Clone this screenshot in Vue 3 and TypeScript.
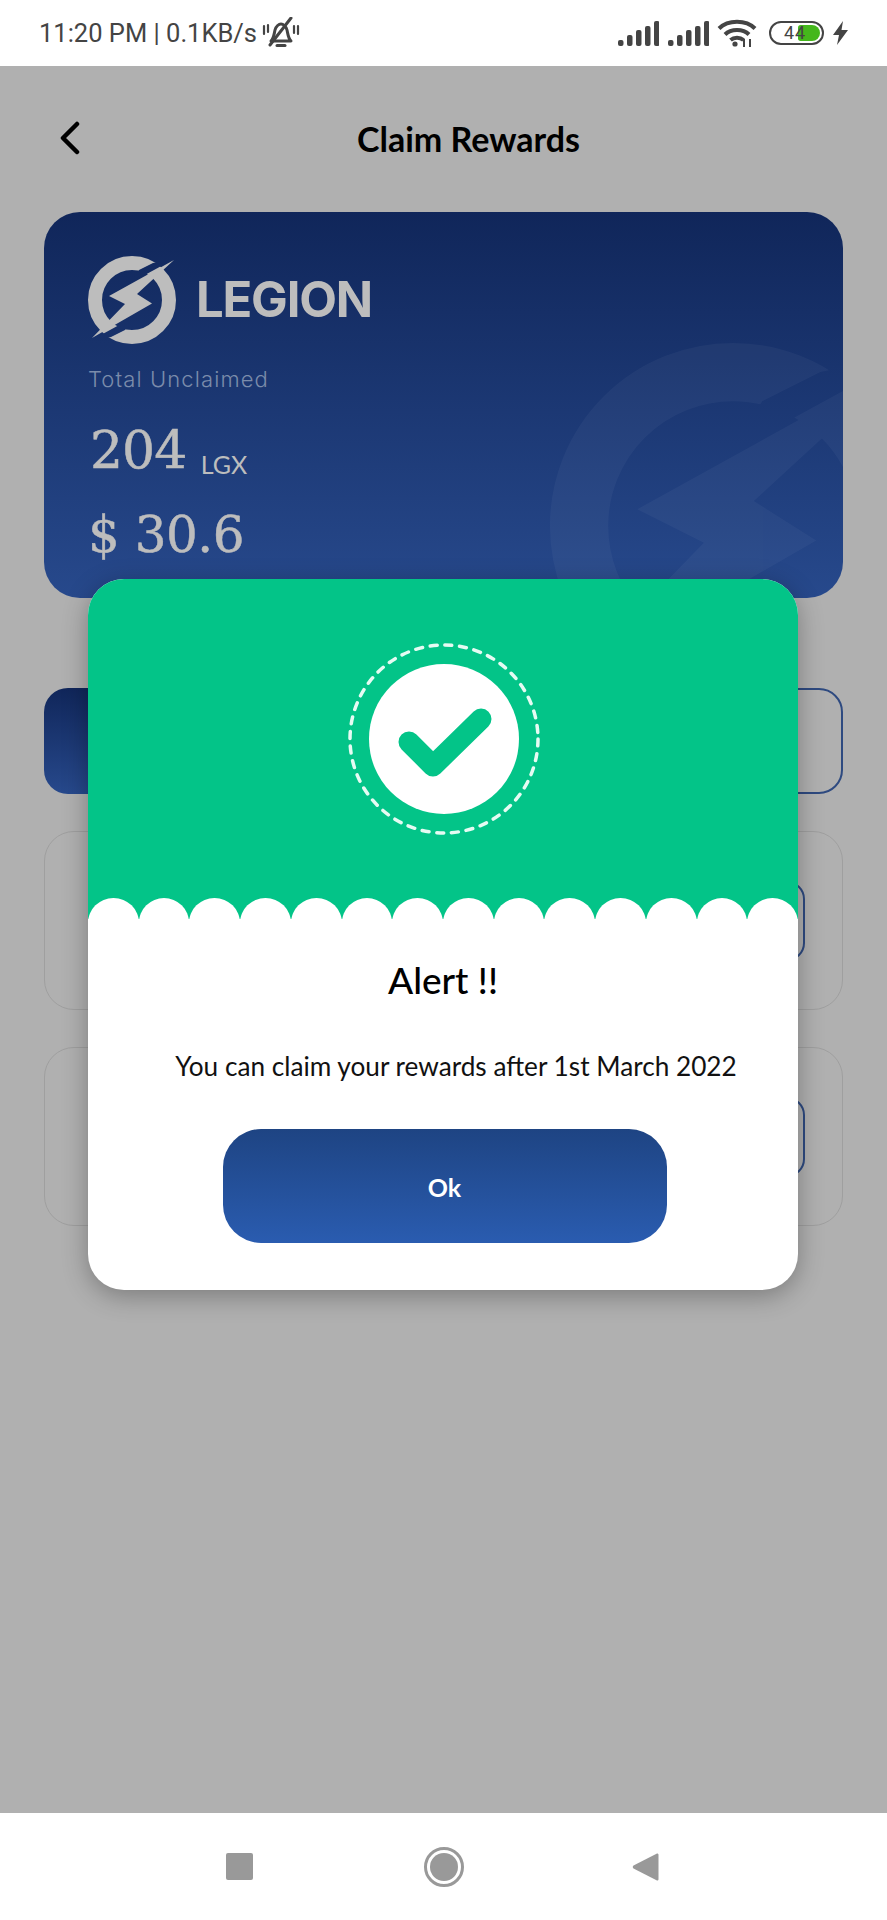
<template>
  <div class="page">
    <svg class="defs" width="0" height="0">
      <defs>
        <mask id="slash" maskUnits="userSpaceOnUse" x="-50" y="-50" width="100" height="100">
          <rect x="-50" y="-50" width="100" height="100" fill="#fff" />
          <polygon points="7,-30 21,-37 44,-42 0,-18" fill="#000" />
          <polygon points="-7,30 -21,37 -44,42 0,18" fill="#000" />
        </mask>
        <symbol id="legion" viewBox="-50 -50 100 100">
          <circle r="37" fill="none" stroke="currentColor" stroke-width="14" mask="url(#slash)" />
          <polygon points="-23,-4 42,-40 5,-6 20,3.5 -40,38 -7,4" fill="currentColor" />
        </symbol>
      </defs>
    </svg>

    <header class="status">
      <div class="status-left">
        <span class="clock">11:20 PM | 0.1KB/s</span>
        <svg class="bell" width="38" height="32" viewBox="0 0 38 32" fill="none" stroke="#444">
          <path d="M9 24c3-3 3-7 4-11 1-4 4-6 6-6s5 2 6 6c1 4 1 8 4 11z" stroke-width="3" stroke-linejoin="round" />
          <path d="M15 28.500h8" stroke-width="3" stroke-linecap="round" />
          <path d="M8 28 29 1" stroke-width="3" stroke-linecap="round" />
          <path d="M2 9v8M6 8v7M32 9v7M36 9v8" stroke-width="2.200" stroke-linecap="round" />
        </svg>
      </div>
      <div class="status-right">
        <svg v-for="n in 2" :key="n" class="signal" width="41" height="25" viewBox="0 0 41 25" fill="#444">
          <rect v-for="(h, i) in bars" :key="i" :x="i * 9" :y="25 - h" width="5.500" :height="h" rx="2" />
        </svg>
        <svg class="wifi" width="40" height="28" viewBox="0 0 40 28" fill="none" stroke="#444" stroke-width="4">
          <path d="M2 9.500C11 .5 29 .5 38 9.500" />
          <path d="M8 15.500c6-6 18-6 24 0" />
          <path d="M13.500 21c3.500-3 9.500-3 13 0" />
          <circle cx="18" cy="25" r="2.600" fill="#444" stroke="none" />
          <path d="M27 20v8M33 20v8" stroke-width="2" />
        </svg>
        <div class="battery">
          <span class="level"></span>
          <span class="pct">44</span>
        </div>
        <svg width="15" height="24" viewBox="0 0 15 24" fill="#444">
          <path d="M10 0 0 14h6l-2 10 11-15H8.500z" />
        </svg>
      </div>
    </header>

    <main class="backdrop">
      <div class="topbar">
        <svg class="back" width="22" height="34" viewBox="0 0 22 34" fill="none" stroke="#000" stroke-width="4.500" stroke-linecap="round" stroke-linejoin="round">
          <path d="M18 3 4 17l14 14" />
        </svg>
        <h1 class="title">Claim Rewards</h1>
      </div>

      <section class="card">
        <svg class="watermark"><use href="#legion" /></svg>
        <div class="brand">
          <svg class="logo"><use href="#legion" /></svg>
          <span class="brand-name">LEGION</span>
        </div>
        <div class="unclaimed">Total Unclaimed</div>
        <div class="amount">204 <span class="unit">LGX</span></div>
        <div class="amount usd">$ 30.6</div>
      </section>

      <div class="tabs">
        <div class="tab active"></div>
        <div class="tab"></div>
      </div>

      <div v-for="n in 2" :key="n" class="row">
        <div class="row-btn"></div>
      </div>
    </main>

    <footer class="navbar">
      <span class="nav-square"></span>
      <svg width="42" height="42" viewBox="0 0 42 42">
        <circle cx="21" cy="21" r="18.500" fill="none" stroke="#999" stroke-width="3" />
        <circle cx="21" cy="21" r="14" fill="#999" />
      </svg>
      <svg class="nav-back" width="28" height="30" viewBox="0 0 28 30">
        <path d="M25 1.500c1 0 1.500.5 1.500 1.500v24c0 1-.5 1.500-1.500 1.500L1.500 16.500c-1-.8-1-2.200 0-3z" fill="#999" />
      </svg>
    </footer>

    <div class="modal">
      <div class="modal-top">
        <svg class="tick" width="200" height="200" viewBox="-100 -100 200 200">
          <circle r="94" fill="none" stroke="#e6fbf3" stroke-width="3.500" stroke-dasharray="7 7.770" stroke-linecap="round" />
          <circle r="75" fill="#fff" />
          <path d="M-35 3-11 27 37-20" fill="none" stroke="#03c488" stroke-width="21" stroke-linecap="round" stroke-linejoin="round" />
        </svg>
        <div class="scallops">
          <span v-for="n in 14" :key="n" class="scallop"></span>
        </div>
      </div>
      <div class="modal-body">
        <h2 class="alert">Alert !!</h2>
        <p class="message">You can claim your rewards after 1st March 2022</p>
        <button class="ok" type="button">Ok</button>
      </div>
    </div>
  </div>
</template>

<script setup lang="ts">
const bars: number[] = [6, 11, 16, 20, 25]
</script>

<style>
html,
body {
  margin: 0;
  background: #fff;
}
</style>

<style scoped>
.page {
  position: relative;
  display: flex;
  flex-direction: column;
  width: 887px;
  height: 1920px;
  overflow: hidden;
  font-family: Lato, "Liberation Sans", sans-serif;
  background: #fff;
}

.defs {
  position: absolute;
}

.status {
  display: flex;
  justify-content: space-between;
  align-items: center;
  flex: none;
  height: 66px;
  padding: 0 39px 0 39px;
  box-sizing: border-box;
  color: #444;
}

.status-left,
.status-right {
  display: flex;
  align-items: center;
}

.clock {
  font-family: Roboto, sans-serif;
  font-size: 25.500px;
  white-space: nowrap;
}

.bell {
  margin-left: 5px;
}

.status-right {
  gap: 9px;
}

.wifi {
  margin-left: -1px;
}

.battery {
  position: relative;
  width: 55px;
  height: 24px;
  margin-left: 3px;
  border: 2.500px solid #444;
  border-radius: 13px;
  box-sizing: border-box;
}

.level {
  position: absolute;
  top: 2px;
  right: 2px;
  bottom: 2px;
  width: 22px;
  background: #45b71c;
  border-radius: 3px 9px 9px 3px;
}

.pct {
  position: absolute;
  top: 0;
  left: 13px;
  font-family: Roboto, sans-serif;
  font-size: 18px;
  line-height: 19px;
  letter-spacing: 1px;
  color: #444;
}

.backdrop {
  flex: 1;
  padding: 0 44px;
  background: #b0b0b0;
}

.topbar {
  display: flex;
  align-items: center;
  height: 146px;
  padding: 0 0 0 15px;
  box-sizing: border-box;
}

.back {
  flex: none;
  margin-top: -2px;
}

.title {
  margin: 0 0 0 276px;
  font-size: 34px;
  font-weight: 700;
  line-height: 40px;
  color: #000;
  white-space: nowrap;
}

.card {
  position: relative;
  height: 386px;
  padding: 38px 0 0 44px;
  box-sizing: border-box;
  overflow: hidden;
  color: #bdbdbd;
  background: linear-gradient(#10265a, #27498c);
  border-radius: 36px;
}

.watermark {
  position: absolute;
  top: 106px;
  left: 481px;
  width: 416px;
  height: 416px;
  color: #fff;
  opacity: 0.035;
}

.brand {
  display: flex;
  align-items: center;
}

.logo {
  flex: none;
  width: 100px;
  height: 100px;
  margin: 0 0 0 -6px;
}

.brand-name {
  margin-left: 14px;
  font-family: Inter, sans-serif;
  font-size: 49px;
  font-weight: 700;
  letter-spacing: -1.200px;
  line-height: 50px;
}

.unclaimed {
  margin-top: 15px;
  font-family: Inter, sans-serif;
  font-size: 22px;
  font-weight: 300;
  letter-spacing: 1.100px;
  line-height: 28px;
  color: #7b8cab;
}

.amount {
  position: relative;
  margin-top: 25px;
  padding-left: 2px;
  font-family: "DejaVu Serif", serif;
  font-size: 52px;
  letter-spacing: -1px;
  line-height: 64px;
  -webkit-text-stroke: 0.5px #bdbdbd;
}

.unit {
  margin-left: -1px;
  font-family: Lato, sans-serif;
  font-size: 25px;
  letter-spacing: 0;
  vertical-align: -6px;
  -webkit-text-stroke: 0;
}

.usd {
  margin-top: 7px;
  padding-left: 0;
  font-size: 50px;
  letter-spacing: -0.500px;
}

.tabs {
  display: grid;
  grid-template-columns: 1fr 1fr;
  gap: 20px;
  height: 106px;
  margin-top: 90px;
}

.tab {
  border: 2.500px solid #2e4a80;
  border-radius: 24px;
}

.tab.active {
  border: 0;
  background: linear-gradient(#10265a, #27498c);
}

.row {
  display: flex;
  align-items: center;
  justify-content: flex-end;
  height: 179px;
  margin-top: 37px;
  padding-right: 37px;
  box-sizing: border-box;
  border: 1.500px solid #9f9f9f;
  border-radius: 30px;
}

.row-btn {
  width: 120px;
  height: 76px;
  border: 2.500px solid #2e4a80;
  border-radius: 18px;
}

.navbar {
  display: flex;
  align-items: center;
  flex: none;
  gap: 170px;
  height: 107px;
  padding: 0 0 0 226px;
  box-sizing: border-box;
  background: #fff;
}

.nav-square {
  width: 27px;
  height: 27px;
  background: #999;
  border-radius: 2px;
}

.nav-back {
  margin-left: -3px;
}

.modal {
  position: absolute;
  top: 579px;
  left: 88px;
  width: 710px;
  height: 711px;
  overflow: hidden;
  background: #fff;
  border-radius: 36px;
  box-shadow: 0 6px 26px rgba(0, 0, 0, 0.3);
}

.modal-top {
  position: relative;
  display: flex;
  justify-content: center;
  height: 340px;
  padding-top: 60px;
  box-sizing: border-box;
  background: #03c488;
}

.tick {
  flex: none;
  margin-left: 2px;
}

.scallops {
  position: absolute;
  right: 0;
  bottom: 0;
  left: 0;
  display: grid;
  grid-template-columns: repeat(14, 1fr);
  height: 21px;
  overflow: hidden;
}

.scallop {
  height: 50px;
  background: #fff;
  border-radius: 50%;
}

.modal-body {
  display: flex;
  flex-direction: column;
  align-items: center;
  padding-top: 39px;
}

.alert {
  margin: 0;
  font-size: 37px;
  font-weight: 500;
  line-height: 44px;
  color: #000;
}

.message {
  margin: 48px 0 0;
  padding-left: 26px;
  font-size: 26.200px;
  line-height: 32px;
  color: #111;
  white-space: nowrap;
}

.ok {
  width: 444px;
  height: 114px;
  margin: 47px 0 0 3px;
  padding-top: 2px;
  font-family: Lato, sans-serif;
  font-size: 25px;
  font-weight: 700;
  color: #fff;
  background: linear-gradient(#1e4483, #2a5cb0);
  border: 0;
  border-radius: 38px;
}
</style>
